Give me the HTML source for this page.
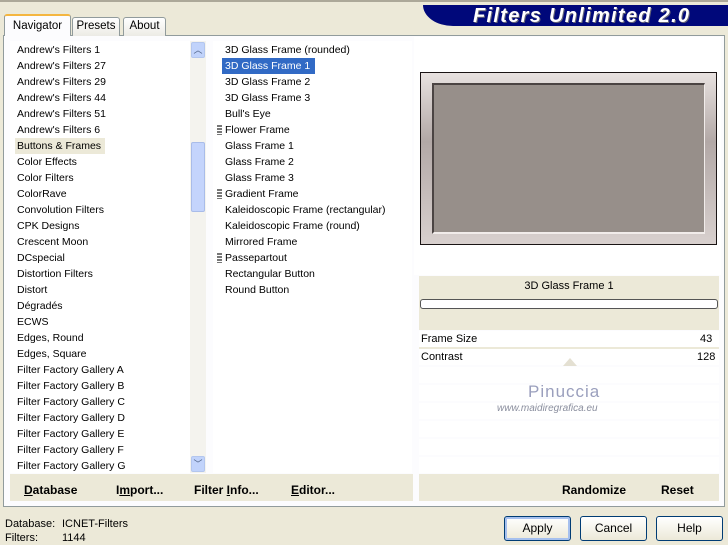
<!DOCTYPE html>
<html><head><meta charset="utf-8"><style>
*{margin:0;padding:0;box-sizing:border-box}
body{width:728px;height:545px;background:#ece9d8;font-family:"Liberation Sans",sans-serif;font-size:11px;color:#000;position:relative;overflow:hidden}
.abs{position:absolute}
.topline{left:0;top:0;width:728px;height:2px;background:#aca899}
.banner{left:423px;top:5px;width:305px;height:21px;background:#00087a;border-radius:0 0 0 30px/0 0 0 21px}
.banner span{position:absolute;left:50px;top:0px;color:#fff;font:italic bold 20px "Liberation Sans",sans-serif;letter-spacing:1.3px;text-shadow:1px 1px 0 #667;white-space:nowrap}
.tab{top:17px;height:19px;border:1px solid #919b9c;border-bottom:none;background:linear-gradient(#fff,#ecebe5);border-radius:3px 3px 0 0;text-align:center;line-height:17px;font-size:11.5px}
.panel{left:3px;top:35px;width:722px;height:472px;border:1px solid #919b9c;background:#fcfcfe}
.list{background:#fff}
.item{position:absolute;height:16px;line-height:16px;font-size:10.5px;white-space:nowrap}
.bar{background:#ece9d8;}
.btnb{font-weight:bold;font-size:12px;position:absolute;top:483px}
.btn{top:516px;width:67px;height:25px;border:1px solid #003c74;border-radius:3px;background:linear-gradient(#fff,#ece9d8);text-align:center;line-height:23px;font-size:12px}
.row{position:absolute;left:419px;width:300px;height:16px;background:#fff}
</style></head><body>
<div class="abs topline"></div>
<div class="abs banner"><span>Filters Unlimited 2.0</span></div>
<div class="abs panel"></div>
<div class="abs tab" style="left:4px;top:14px;width:67px;height:22px;border-top:2px solid #f4b640;background:#fcfcfe;line-height:20px">Navigator</div>
<div class="abs tab" style="left:72px;width:48px">Presets</div>
<div class="abs tab" style="left:123px;width:43px">About</div>

<div class="abs list" style="left:10px;top:41px;width:180px;height:432px"></div>
<div class="abs" style="left:190px;top:41px;width:16px;height:432px;background:#f4f3ee"></div>
<div class="abs" style="left:191px;top:42px;width:14px;height:16px;background:#c1d3fb;border:1px solid #b3c6ee;border-radius:2px;color:#4d6185;font-size:9px;text-align:center;line-height:14px">︿</div>
<div class="abs" style="left:191px;top:142px;width:14px;height:70px;background:#c4d4fc;border:1px solid #a9bce9;border-radius:2px"></div>
<div class="abs" style="left:191px;top:456px;width:14px;height:16px;background:#c1d3fb;border:1px solid #b3c6ee;border-radius:2px;color:#4d6185;font-size:9px;text-align:center;line-height:14px">﹀</div>
<div class="abs" style="left:15px;top:138px;width:90px;height:16px;background:#ece9d8"></div>
<div class="abs list" style="left:213px;top:41px;width:199px;height:432px"></div>
<div class="abs" style="left:222px;top:58px;width:93px;height:16px;background:#316ac5"></div>

<div class="abs" style="left:414px;top:37px;width:307px;height:238px;background:#fff"></div>
<div class="abs" style="left:420px;top:72px;width:297px;height:173px;background:#1a1414;padding:1px">
 <div style="width:100%;height:100%;background:linear-gradient(#e8e2e0,#b2a8a6 40%,#d8d0ce);padding:10px 11px 10px 11px">
  <div style="width:100%;height:100%;background:#978f8a;border-top:2px solid #4b4443;border-left:2px solid #4b4443;border-right:1px solid #f1ecea;border-bottom:2px solid #f1ecea"></div>
 </div>
</div>
<div class="abs" style="left:419px;top:276px;width:300px;height:54px;background:#ece9d8"></div>
<div class="abs" style="left:419px;top:280px;width:300px;text-align:center;font-size:11px">3D Glass Frame 1</div>
<div class="abs" style="left:420px;top:299px;width:298px;height:10px;border:1px solid #555;border-radius:3px;background:#fff"></div>
<div class="row" style="top:331px"></div><div class="row" style="top:349px"></div><div class="row" style="top:367px"></div><div class="row" style="top:385px"></div><div class="row" style="top:403px"></div><div class="row" style="top:421px"></div><div class="row" style="top:439px"></div><div class="row" style="top:457px"></div>
<div class="abs" style="left:419px;top:347px;width:300px;height:2px;background:#ece9d8"></div>
<div class="abs" style="left:421px;top:333px">Frame Size</div><div class="abs" style="left:700px;top:333px">43</div>
<div class="abs" style="left:421px;top:351px">Contrast</div><div class="abs" style="left:697px;top:351px">128</div>
<div class="abs" style="left:563px;top:358px;width:0;height:0;border-left:7px solid transparent;border-right:7px solid transparent;border-bottom:8px solid #e4e0d2"></div>
<div class="abs" style="left:528px;top:382px;font-size:17px;color:#9a9fbd;letter-spacing:1px">Pinuccia</div>
<div class="abs" style="left:497px;top:403px;font-size:10px;color:#8a8e9e;font-style:italic">www.maidiregrafica.eu</div>

<div class="abs bar" style="left:10px;top:474px;width:403px;height:27px"></div>
<div class="abs bar" style="left:419px;top:474px;width:300px;height:27px"></div>
<div class="btnb" style="left:24px"><u>D</u>atabase</div>
<div class="btnb" style="left:116px">I<u>m</u>port...</div>
<div class="btnb" style="left:194px">Filter <u>I</u>nfo...</div>
<div class="btnb" style="left:291px"><u>E</u>ditor...</div>
<div class="btnb" style="left:562px">Randomize</div>
<div class="btnb" style="left:661px">Reset</div>

<div class="abs" style="left:5px;top:518px">Database:</div><div class="abs" style="left:62px;top:518px">ICNET-Filters</div>
<div class="abs" style="left:5px;top:532px">Filters:</div><div class="abs" style="left:62px;top:532px">1144</div>
<div class="abs btn" style="left:504px;box-shadow:inset 0 0 0 2px #a6c0ee">Apply</div>
<div class="abs btn" style="left:580px">Cancel</div>
<div class="abs btn" style="left:656px">Help</div>

<div class="abs" style="left:17px;top:42px">
<div class="item" style="top:0">Andrew's Filters 1</div><div class="item" style="top:16px">Andrew's Filters 27</div><div class="item" style="top:32px">Andrew's Filters 29</div><div class="item" style="top:48px">Andrew's Filters 44</div><div class="item" style="top:64px">Andrew's Filters 51</div><div class="item" style="top:80px">Andrew's Filters 6</div><div class="item" style="top:96px">Buttons &amp; Frames</div><div class="item" style="top:112px">Color Effects</div><div class="item" style="top:128px">Color Filters</div><div class="item" style="top:144px">ColorRave</div><div class="item" style="top:160px">Convolution Filters</div><div class="item" style="top:176px">CPK Designs</div><div class="item" style="top:192px">Crescent Moon</div><div class="item" style="top:208px">DCspecial</div><div class="item" style="top:224px">Distortion Filters</div><div class="item" style="top:240px">Distort</div><div class="item" style="top:256px">Dégradés</div><div class="item" style="top:272px">ECWS</div><div class="item" style="top:288px">Edges, Round</div><div class="item" style="top:304px">Edges, Square</div><div class="item" style="top:320px">Filter Factory Gallery A</div><div class="item" style="top:336px">Filter Factory Gallery B</div><div class="item" style="top:352px">Filter Factory Gallery C</div><div class="item" style="top:368px">Filter Factory Gallery D</div><div class="item" style="top:384px">Filter Factory Gallery E</div><div class="item" style="top:400px">Filter Factory Gallery F</div><div class="item" style="top:416px">Filter Factory Gallery G</div>
</div>
<div class="abs" style="left:225px;top:42px">
<div class="item" style="top:0">3D Glass Frame (rounded)</div><div class="item" style="top:16px;color:#fff">3D Glass Frame 1</div><div class="item" style="top:32px">3D Glass Frame 2</div><div class="item" style="top:48px">3D Glass Frame 3</div><div class="item" style="top:64px">Bull's Eye</div><div class="item" style="top:80px">Flower Frame</div><div class="item" style="top:96px">Glass Frame 1</div><div class="item" style="top:112px">Glass Frame 2</div><div class="item" style="top:128px">Glass Frame 3</div><div class="item" style="top:144px">Gradient Frame</div><div class="item" style="top:160px">Kaleidoscopic Frame (rectangular)</div><div class="item" style="top:176px">Kaleidoscopic Frame (round)</div><div class="item" style="top:192px">Mirrored Frame</div><div class="item" style="top:208px">Passepartout</div><div class="item" style="top:224px">Rectangular Button</div><div class="item" style="top:240px">Round Button</div>
</div>
<div class="abs" style="left:217px;top:125px;width:5px;height:10px;background:repeating-linear-gradient(#777 0 2px,transparent 2px 3px)"></div>
<div class="abs" style="left:217px;top:189px;width:5px;height:10px;background:repeating-linear-gradient(#777 0 2px,transparent 2px 3px)"></div>
<div class="abs" style="left:217px;top:253px;width:5px;height:10px;background:repeating-linear-gradient(#777 0 2px,transparent 2px 3px)"></div>
</body></html>
